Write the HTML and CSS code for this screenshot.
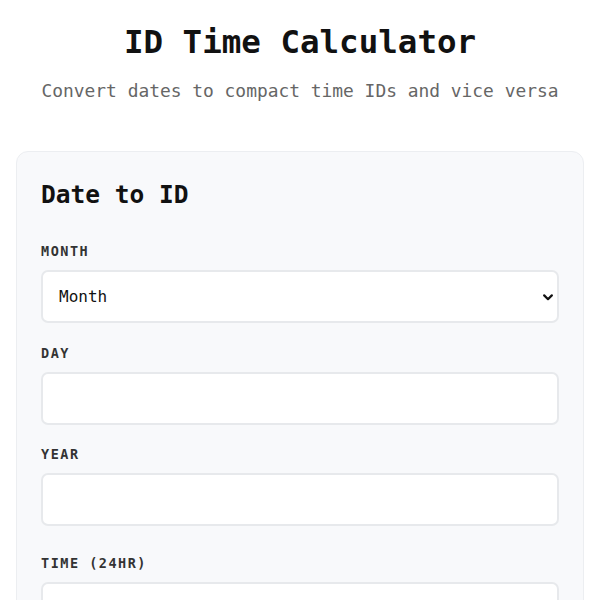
FILE: index.html
```html
<!DOCTYPE html>
<html lang="en">
<head>
<meta charset="utf-8">
<title>ID Time Calculator</title>
<link rel="stylesheet" href="styles.css">
</head>
<body>
<main class="page">
  <header class="header">
    <h1 class="title">ID Time Calculator</h1>
    <p class="subtitle">Convert dates to compact time IDs and vice versa</p>
  </header>
  <section class="card">
    <h2 class="card-title">Date to ID</h2>
    <div class="fields">
      <div class="field">
        <label class="label" for="month">Month</label>
        <div class="select-wrap">
          <select id="month" class="control select">
            <option>Month</option>
          </select>
          <svg class="chevron" width="10" height="7" viewBox="0 0 10 7" aria-hidden="true"><path d="M1.2 1.4 L5 5.2 L8.8 1.4" fill="none" stroke="#111" stroke-width="2.2" stroke-linecap="round" stroke-linejoin="round"/></svg>
        </div>
      </div>
      <div class="field">
        <label class="label" for="day">Day</label>
        <input id="day" class="control" type="text">
      </div>
      <div class="field">
        <label class="label" for="year">Year</label>
        <input id="year" class="control" type="text">
      </div>
      <div class="field field-time">
        <label class="label" for="time">Time (24hr)</label>
        <input id="time" class="control" type="text">
      </div>
    </div>
  </section>
</main>
</body>
</html>
```
FILE: styles.css
```css
html, body {
  margin: 0;
  padding: 0;
  background: #ffffff;
}
body {
  font-family: "DejaVu Sans Mono", "Liberation Mono", monospace;
  color: #111111;
}
.page {
  padding: 23px 16px 40px;
}
.header {
  text-align: center;
}
.title {
  margin: 0;
  font-size: 32.5px;
  line-height: 38px;
  font-weight: bold;
  color: #111111;
}
.subtitle {
  margin: 18px 0 48px;
  font-size: 17.9px;
  line-height: 24px;
  color: #666666;
}
.card {
  background: #f8f9fb;
  border: 1px solid #eceef1;
  border-radius: 12px;
  padding: 24px;
}
.card-title {
  margin: 0 0 27px;
  font-size: 24.5px;
  line-height: 38px;
  font-weight: bold;
  color: #111111;
}
.fields {
  display: flex;
  flex-direction: column;
  gap: 19.5px;
}
.field {
  display: flex;
  flex-direction: column;
  gap: 9px;
}
.field-time {
  margin-top: 7.5px;
}
.label {
  font-size: 13.5px;
  line-height: 20px;
  font-weight: bold;
  letter-spacing: 1.5px;
  text-transform: uppercase;
  color: #333333;
}
.select-wrap {
  position: relative;
}
.control {
  box-sizing: border-box;
  width: 100%;
  height: 53px;
  margin: 0;
  padding: 0 16px;
  border: 2px solid #e7e9ec;
  border-radius: 7px;
  background: #ffffff;
  font-family: inherit;
  font-size: 16px;
  color: #111111;
  outline: none;
}
.select {
  -webkit-appearance: none;
  appearance: none;
}
.chevron {
  position: absolute;
  right: 6px;
  top: 50%;
  margin-top: -3px;
  pointer-events: none;
}
```
